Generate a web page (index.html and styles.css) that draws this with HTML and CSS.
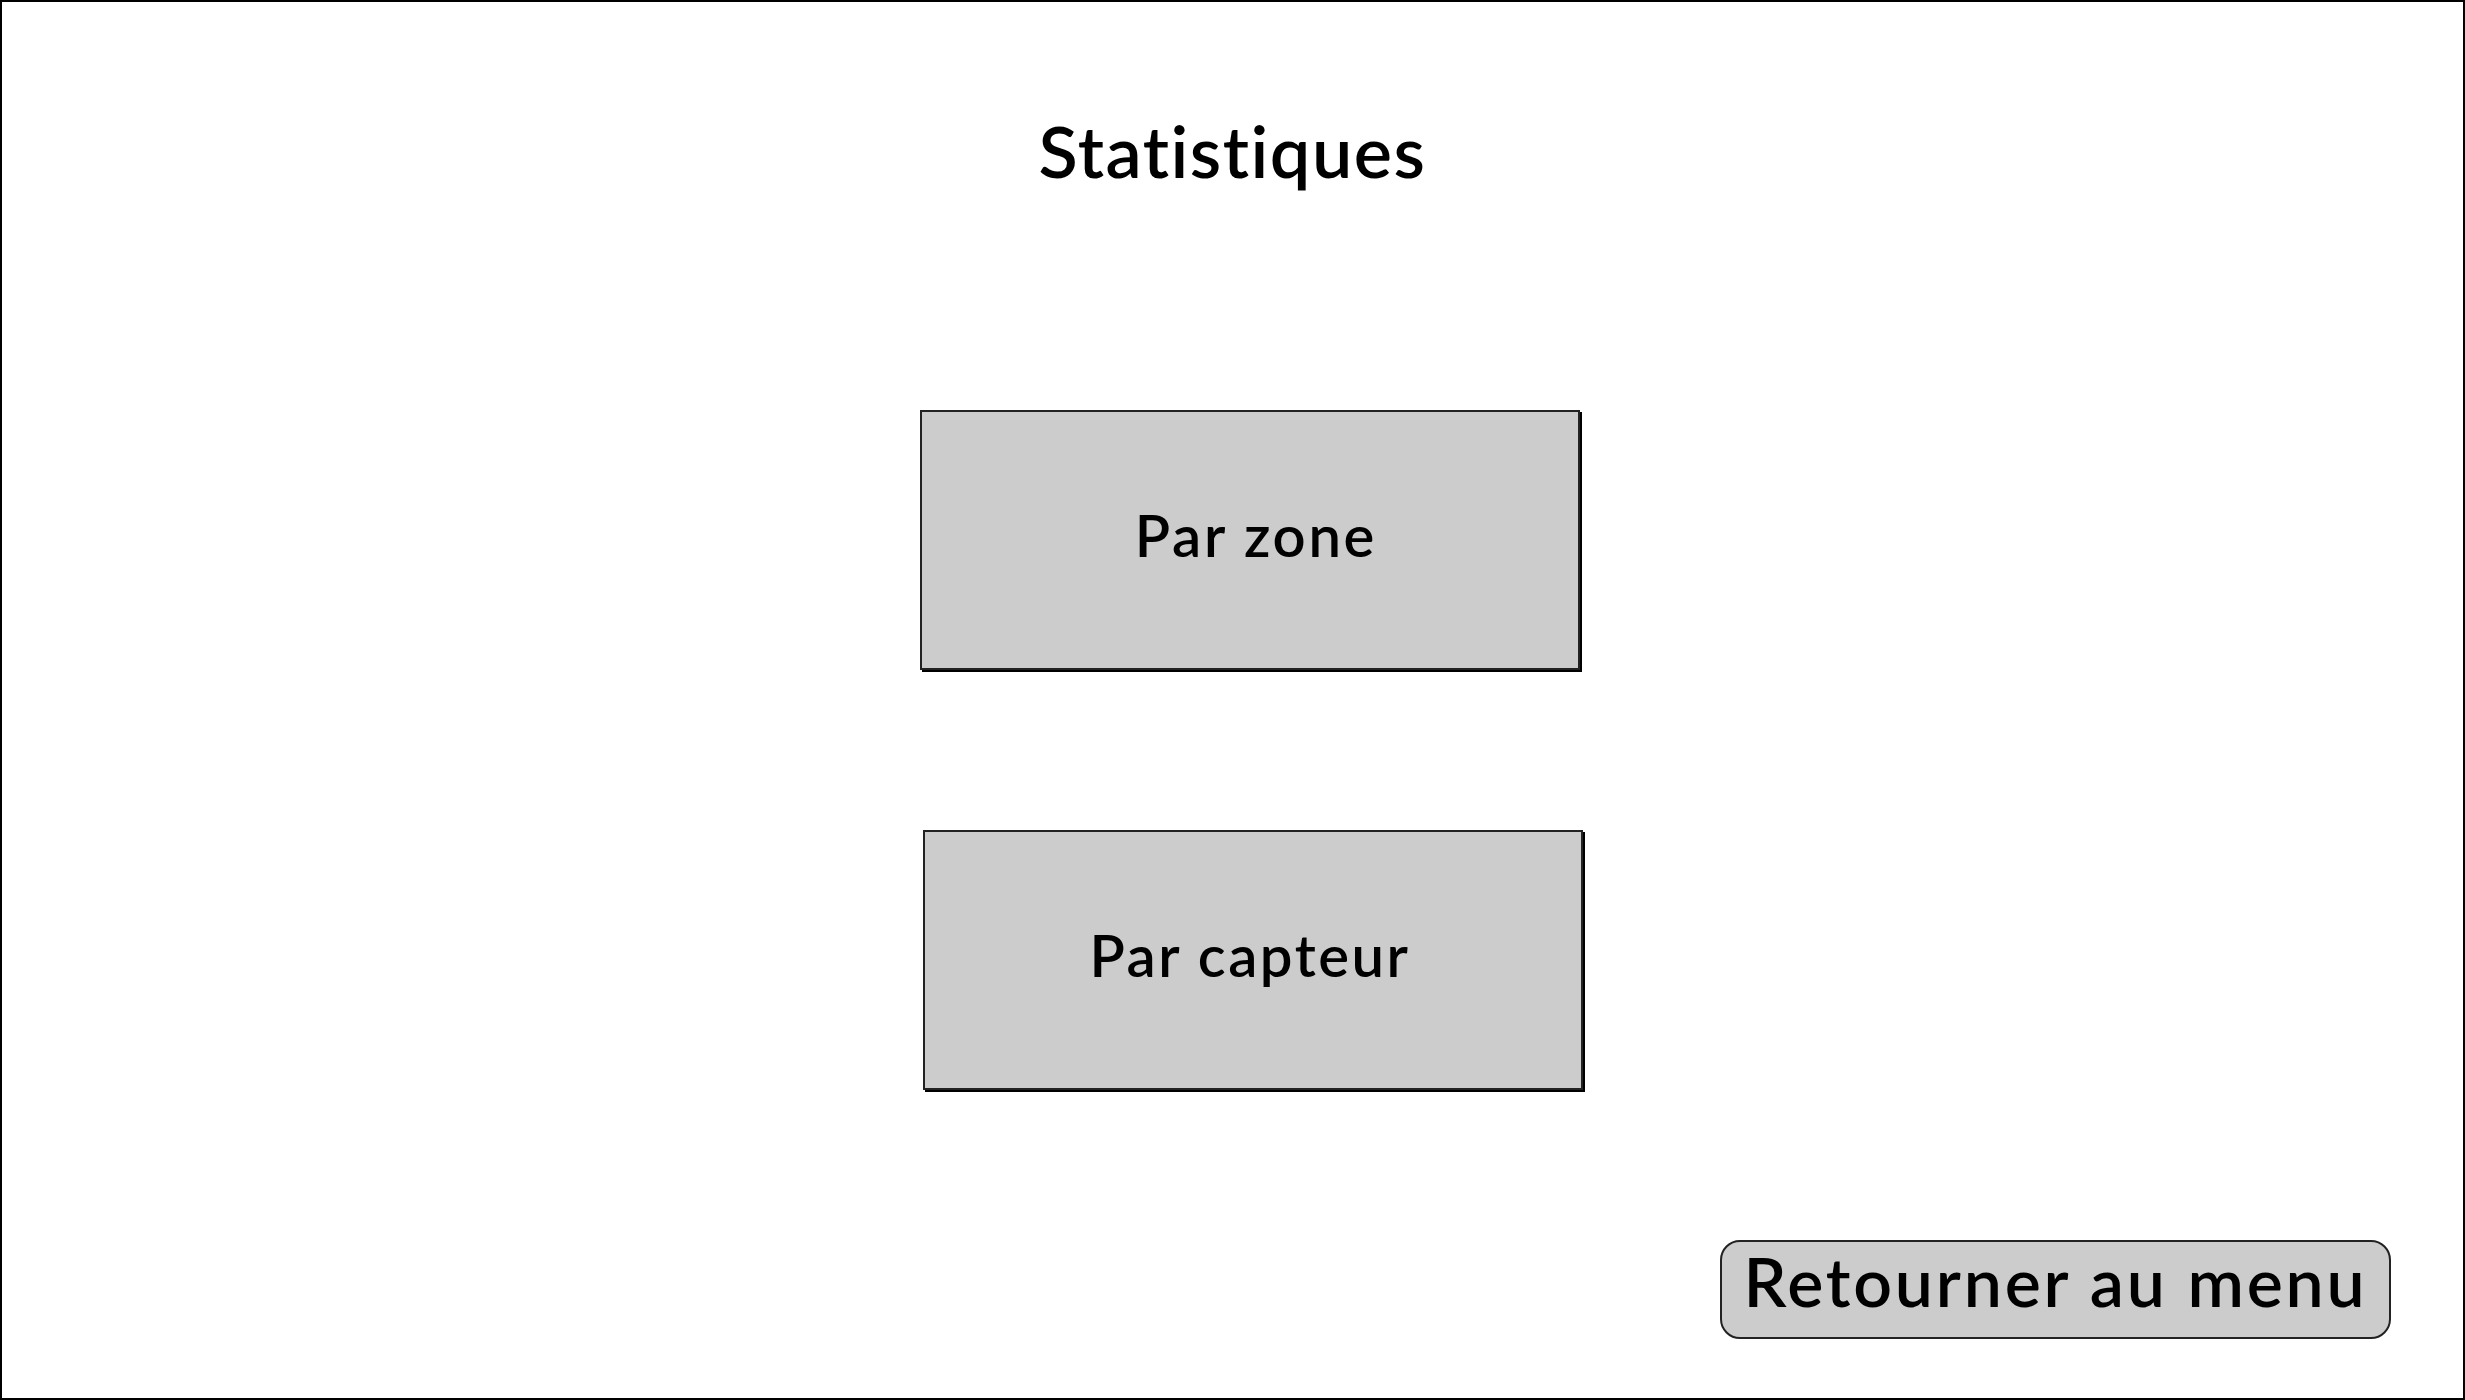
FILE: index.html
```html
<!DOCTYPE html>
<html>
<head>
  <meta charset="utf-8">
  <link rel="stylesheet" href="styles.css">
</head>
<body>
  <div class="frame">
    <h1 class="title">Statistiques</h1>

    <div class="choices">
      <button class="choice choice-zone">Par zone</button>
      <button class="choice choice-sensor">Par capteur</button>
    </div>

    <div class="footer">
      <button class="back-btn">Retourner au menu</button>
    </div>
  </div>
</body>
</html>
```

FILE: styles.css
```css
* {
  margin: 0;
  padding: 0;
  box-sizing: border-box;
}

body {
  width: 100%;
  height: 100vh;
  background: #fff;
  color: #000;
  font-family: 'Lato', 'Open Sans', sans-serif;
  overflow: hidden;
}

.frame {
  width: 100%;
  height: 100%;
  border: 2px solid #000;
  display: flex;
  flex-direction: column;
}

.title {
  padding-top: 103px;
  padding-bottom: 4px;
  font-size: 72px;
  font-weight: 600;
  line-height: 91px;
  text-align: center;
  letter-spacing: 1.5px;
}

.choices {
  display: flex;
  flex-direction: column;
  gap: 160px;
  margin-top: 210px;
}

.choice {
  width: 660px;
  height: 260px;
  padding-bottom: 12px;
  background: #ccc;
  border: 2px solid #222;
  box-shadow: 2px 2px 0 #000;
  font-family: inherit;
  font-size: 58px;
  font-weight: 600;
  color: #000;
  letter-spacing: 2.7px;
  cursor: pointer;
}

.choice-zone {
  margin-left: 918px;
  padding-left: 12px;
}

.choice-sensor {
  margin-left: 921px;
  padding-right: 6px;
  letter-spacing: 2.5px;
}

.footer {
  display: flex;
  justify-content: flex-end;
  padding-right: 72px;
  margin-top: 150px;
}

.back-btn {
  width: 671px;
  height: 99px;
  padding-bottom: 18px;
  background: #ccc;
  border: 2px solid #222;
  border-radius: 20px;
  font-family: inherit;
  font-size: 68px;
  font-weight: 600;
  line-height: 1;
  color: #000;
  letter-spacing: 2.8px;
  cursor: pointer;
}
```
